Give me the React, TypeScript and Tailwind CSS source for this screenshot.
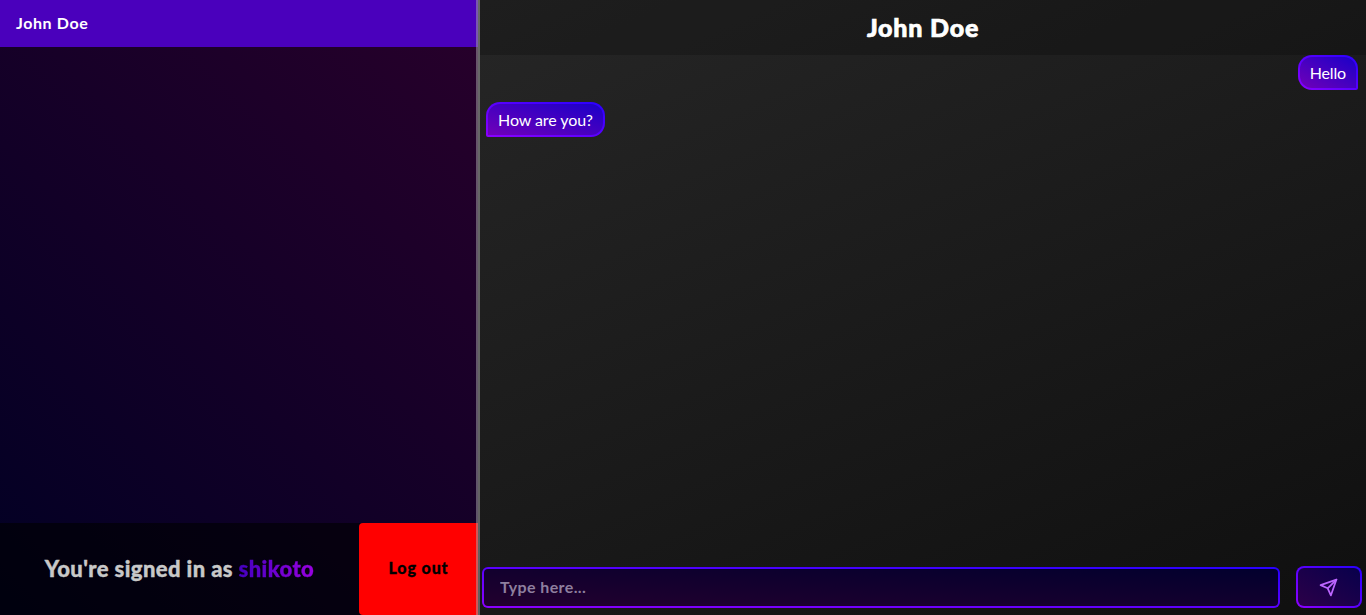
const bubble =
  "h-[35px] border-2 border-transparent px-[10px] text-[16px] leading-[31px] text-white whitespace-nowrap [background:linear-gradient(to_top_right,#7000b8,#1a00c8)_padding-box,linear-gradient(to_top_right,#8c00ff,#2800ff)_border-box]";

export default function App() {
  return (
    <div className="flex h-[615px] w-[1366px] overflow-hidden bg-[linear-gradient(to_bottom_right,#2b2b2b,#0f0f0f)] font-[Lato,sans-serif]">
      <aside className="relative flex w-[478px] shrink-0 flex-col bg-[linear-gradient(45deg,#010024,#28002b)]">
        <div className="h-[47px] bg-[#4a00bc] pl-4 text-[16px] leading-[46px] font-bold text-white">
          <span className="inline-block tracking-[0.6px]">John Doe</span>
        </div>
        <div className="flex-1" />
        <footer className="flex h-[92px] bg-black/60">
          <div className="flex w-[359px] items-center justify-center pb-[2px] text-[22px] font-black tracking-[0.4px] whitespace-pre text-[#c8c8c8] [-webkit-text-stroke:0.4px_#c8c8c8]">
            <span>You're signed in as </span>
            <span className="bg-[linear-gradient(90deg,#4500c0,#9800e0)] bg-clip-text text-transparent [-webkit-text-stroke:0.4px_transparent]">shikoto</span>
          </div>
          <button className="flex-1 rounded-l-[4px] bg-[#ff0000] pb-[2px] text-[16px] font-black tracking-[0.9px] text-black [-webkit-text-stroke:0.3px_black]">Log out</button>
        </footer>
        <div className="absolute inset-y-0 -right-0.5 w-1 bg-[#aaa]/50" />
      </aside>
      <main className="ml-[2px] flex flex-1 flex-col">
        <header className="h-[55px] bg-black/20 text-center text-[25px] leading-[54px] font-black tracking-[0.8px] text-white [-webkit-text-stroke:0.7px_white]">John Doe</header>
        <section className="flex flex-1 flex-col">
          <div className={`${bubble} mr-2 self-end rounded-[14px] rounded-br-[2px] tracking-[-0.15px]`}>Hello</div>
          <div className={`${bubble} mt-3 ml-[6px] self-start rounded-[14px] rounded-bl-[2px] tracking-[-0.08px]`}>How are you?</div>
        </section>
        <form className="flex h-[49px] gap-4 pr-1 pl-[2px]">
          <input placeholder="Type here..." className="mt-px h-[41px] w-[798px] rounded-md border-2 border-transparent px-4 pb-[2px] text-[16px] font-bold tracking-[0.4px] placeholder:text-[#8e7f9e] [background:linear-gradient(to_top_right,#22002e,#02002e)_padding-box,linear-gradient(to_top_right,#8c00ff,#2800ff)_border-box]" />
          <button type="button" className="flex h-[42px] w-[66px] items-center justify-center rounded-lg border-2 border-transparent pt-px pr-[2px] text-[#bd66ff] [background:linear-gradient(to_top_right,#2c0048,#08004c)_padding-box,linear-gradient(to_top_right,#8c00ff,#2800ff)_border-box]">
            <svg width="19" height="19" viewBox="0 0 24 24" fill="none" stroke="currentColor" strokeWidth="2.2" strokeLinecap="round" strokeLinejoin="round">
              <path d="M22 2L11 13" />
              <path d="M22 2L15 22L11 13L2 9Z" />
            </svg>
          </button>
        </form>
      </main>
    </div>
  );
}
